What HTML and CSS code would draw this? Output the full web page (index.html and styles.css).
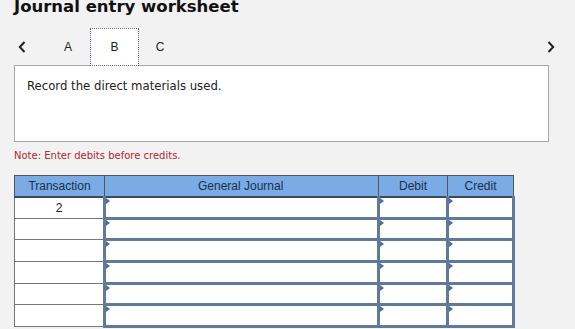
FILE: index.html
```html
<!DOCTYPE html>
<html>
<head>
<meta charset="utf-8">
<link rel="stylesheet" href="styles.css">
</head>
<body>
<div class="page">
  <h1 class="title">Journal entry worksheet</h1>
  <div class="tabs">
    <span class="nav prev"><svg width="8" height="12" viewBox="0 0 8 12"><path d="M6.5 1 L1.8 6 L6.5 11" fill="none" stroke="#222" stroke-width="2"/></svg></span>
    <span class="tab tab-a">A</span>
    <span class="tab tab-b">B</span>
    <span class="tab tab-c">C</span>
    <span class="spacer"></span>
    <span class="nav next"><svg width="8" height="12" viewBox="0 0 8 12"><path d="M1.5 1 L6.2 6 L1.5 11" fill="none" stroke="#222" stroke-width="2"/></svg></span>
  </div>
  <div class="prompt">Record the direct materials used.</div>
  <div class="note">Note: Enter debits before credits.</div>
  <table class="journal">
    <colgroup>
      <col class="w-tr">
      <col class="w-gj">
      <col class="w-dr">
      <col class="w-cr">
    </colgroup>
    <thead>
      <tr>
        <th>Transaction</th>
        <th class="gj">General Journal</th>
        <th>Debit</th>
        <th>Credit</th>
      </tr>
    </thead>
    <tbody>
      <tr><td class="tr">2</td><td class="in"></td><td class="in"></td><td class="in"></td></tr>
      <tr><td class="tr"></td><td class="in"></td><td class="in"></td><td class="in"></td></tr>
      <tr><td class="tr"></td><td class="in"></td><td class="in"></td><td class="in"></td></tr>
      <tr><td class="tr"></td><td class="in"></td><td class="in"></td><td class="in"></td></tr>
      <tr><td class="tr"></td><td class="in"></td><td class="in"></td><td class="in"></td></tr>
      <tr><td class="tr"></td><td class="in"></td><td class="in"></td><td class="in"></td></tr>
    </tbody>
  </table>
</div>
</body>
</html>
```

FILE: styles.css
```css
html, body {
  margin: 0;
  padding: 0;
  background: #f2f2f2;
}
.page {
  padding: 0 14px;
  width: 535px;
}
.title {
  margin: -2px 0 0 0;
  font-family: "DejaVu Sans", Verdana, sans-serif;
  font-weight: bold;
  font-size: 16.5px;
  line-height: 18px;
  color: #111;
}
.tabs {
  display: flex;
  align-items: center;
  height: 38px;
  margin-top: 12px;
  margin-bottom: -1px;
  font-family: "Liberation Sans", Arial, sans-serif;
  font-size: 12px;
  color: #222;
  position: relative;
  z-index: 1;
}
.nav {
  display: flex;
  align-items: center;
  width: 8px;
  height: 12px;
}
.prev { margin-left: 4px; }
.next { margin-right: -6px; }
.tab {
  display: flex;
  align-items: center;
  justify-content: center;
  height: 38px;
  box-sizing: border-box;
}
.tab-a { width: 40px; margin-left: 22px; }
.tab-b {
  width: 49px;
  margin-left: 2px;
  background: #fff;
  border: 1px dotted #5a6a80;
}
.tab-c { width: 40px; margin-left: 1px; }
.spacer { flex: 1; }
.prompt {
  box-sizing: border-box;
  height: 77px;
  background: #fff;
  border: 1px solid #a8a8a8;
  padding: 13px 12px;
  font-family: "DejaVu Sans", Verdana, sans-serif;
  font-size: 11.7px;
  color: #222;
}
.note {
  margin-top: 8px;
  font-family: "DejaVu Sans", Verdana, sans-serif;
  font-size: 10px;
  line-height: 12px;
  color: #b3282d;
}
.journal {
  margin-top: 13px;
  border-collapse: collapse;
  table-layout: fixed;
  width: 499px;
  font-family: "Liberation Sans", Arial, sans-serif;
  font-size: 12px;
}
.w-tr { width: 90px; }
.w-gj { width: 274px; }
.w-dr { width: 69px; }
.w-cr { width: 66px; }
.journal th {
  background: #7aabe4;
  color: #1b2f4d;
  font-weight: normal;
  height: 20px;
  padding: 0;
  border: 1px solid #555;
  border-bottom: 2px solid #3b4a5e;
  overflow: hidden;
  white-space: nowrap;
}
.journal th.gj {
  text-align: left;
  text-indent: 93px;
}
.journal td {
  padding: 0;
  height: 18.7px;
  background: #fff;
}
.journal td.tr {
  border: 1px solid #777;
  text-align: center;
  color: #222;
}
.journal td.in {
  border: 3px solid #5f7a9b;
  position: relative;
}
.journal tbody tr:first-child td.in {
  border-top-width: 1px;
}
.journal td.in::before {
  content: "";
  position: absolute;
  left: 0;
  top: 0;
  border-top: 3px solid transparent;
  border-bottom: 3px solid transparent;
  border-left: 4px solid #4a6e9f;
}
```
